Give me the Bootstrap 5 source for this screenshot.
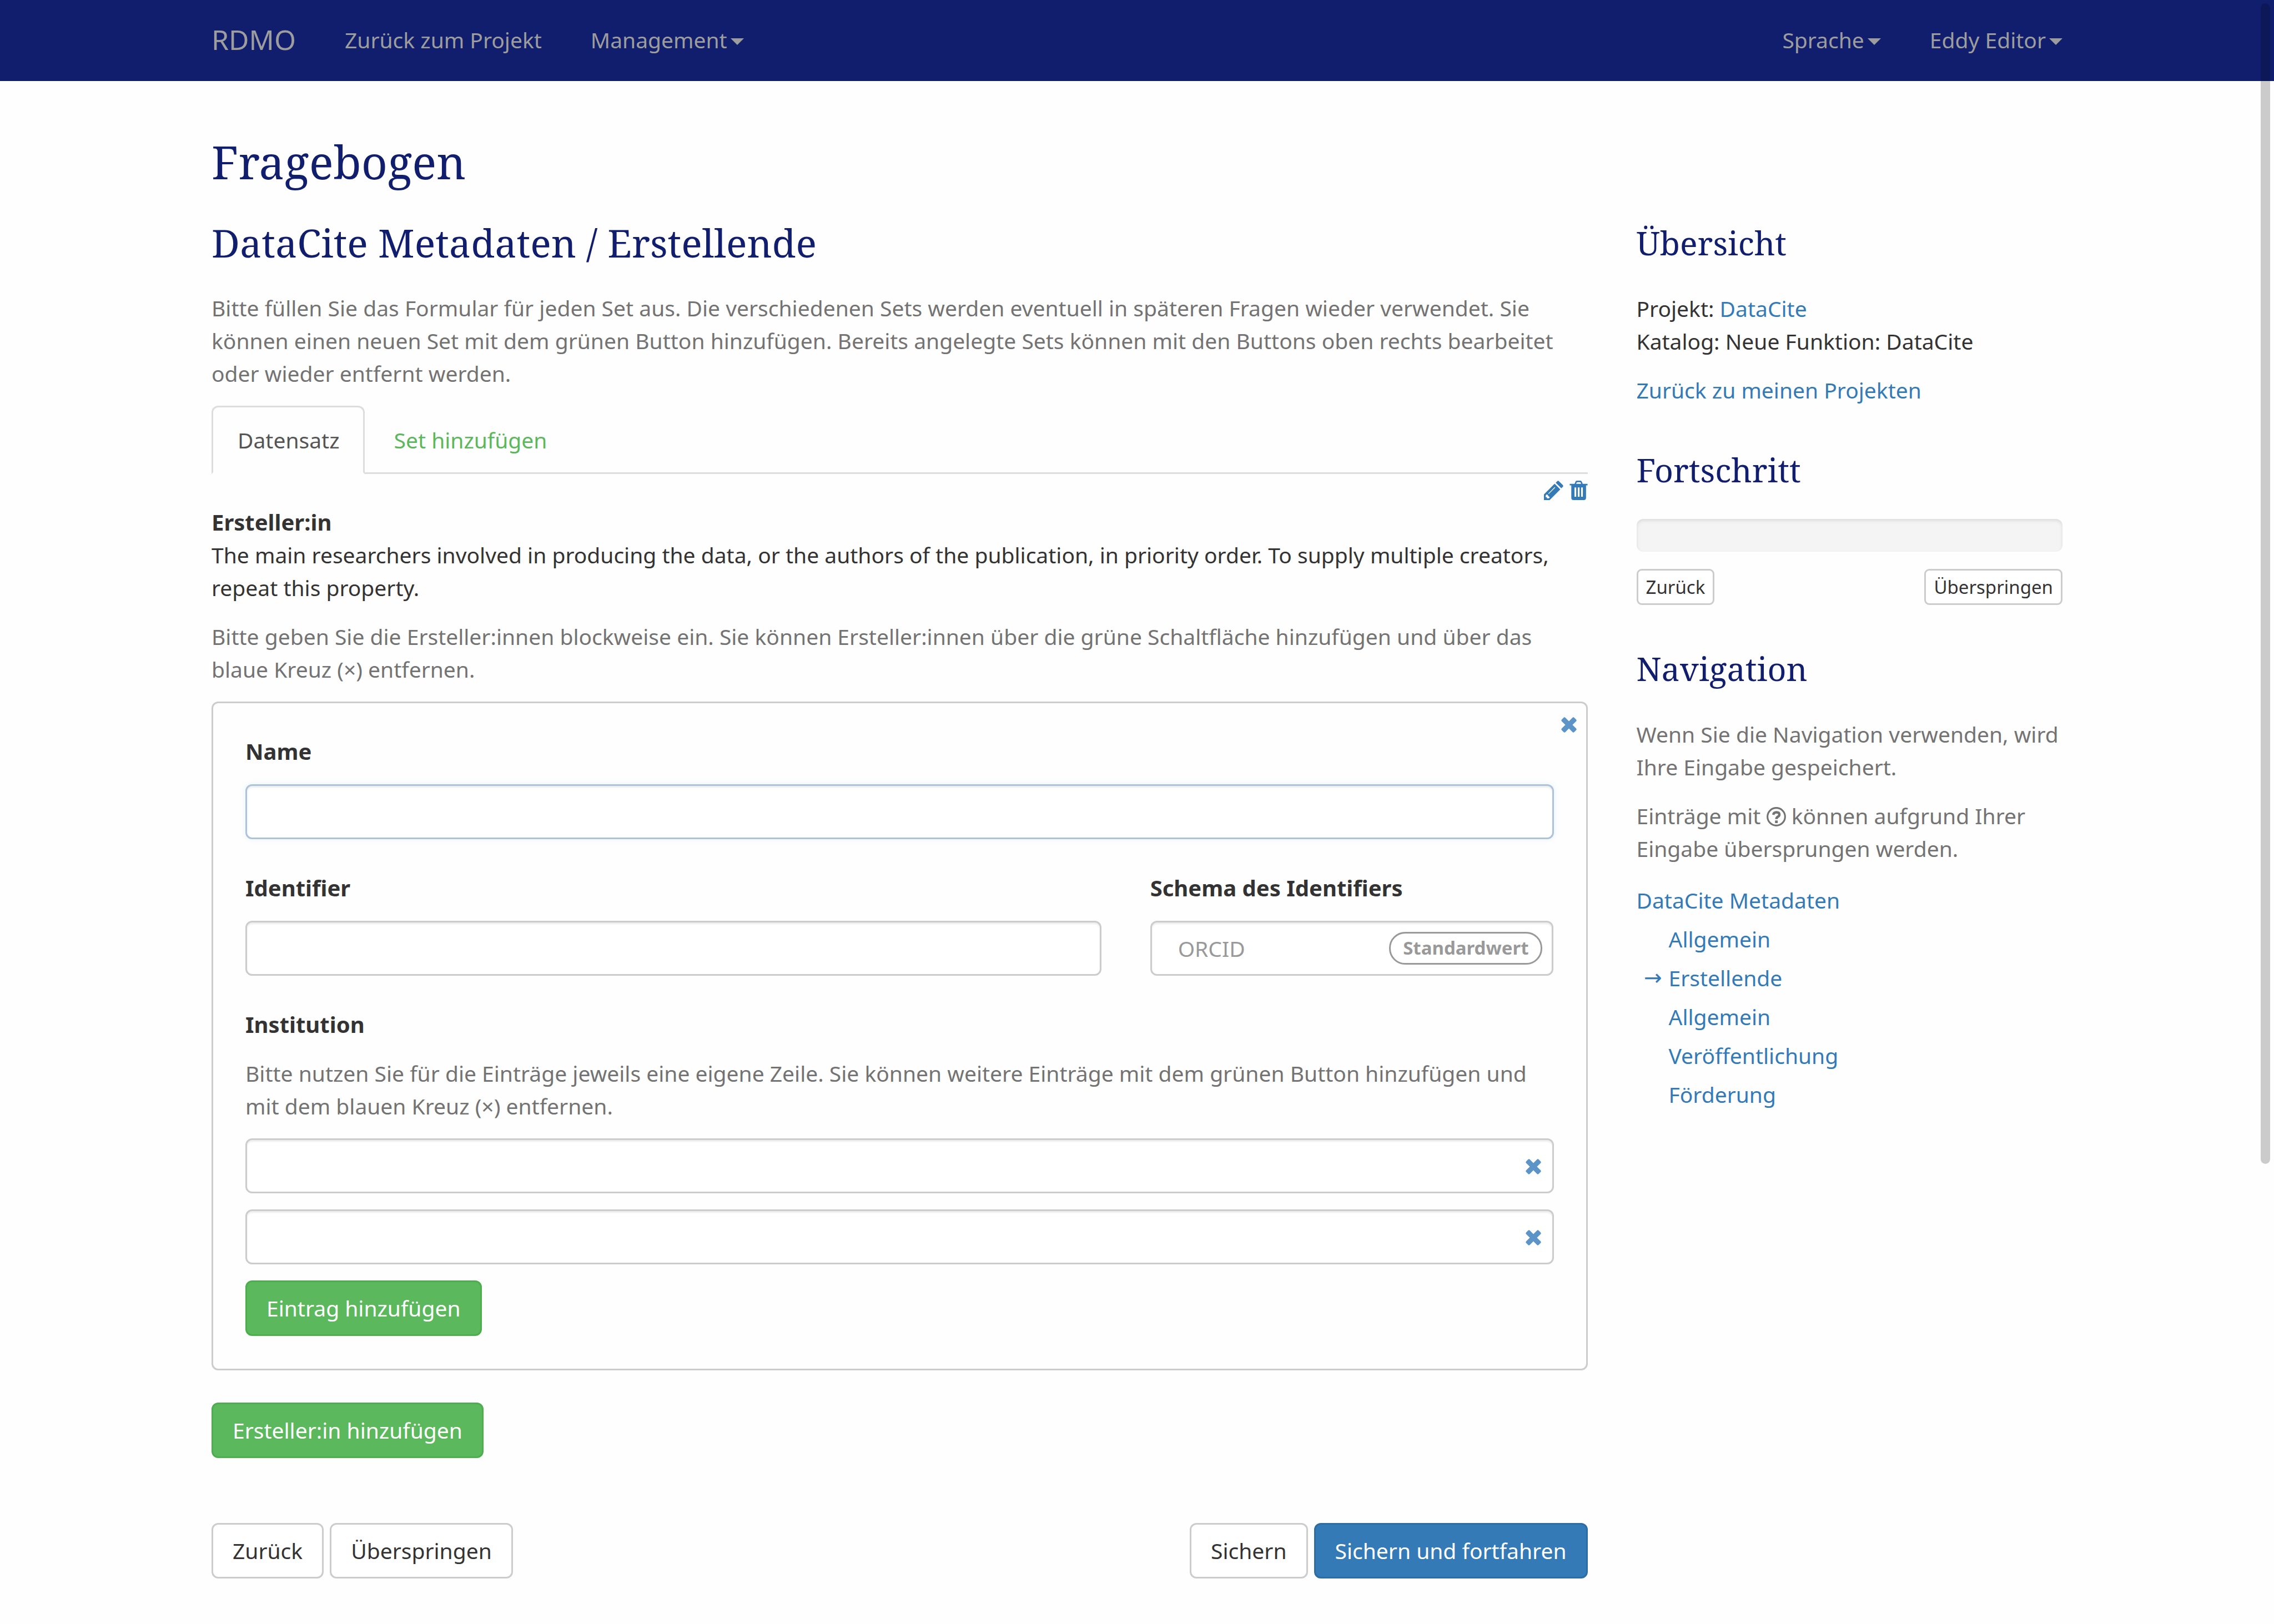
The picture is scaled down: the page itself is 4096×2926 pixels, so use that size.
<!DOCTYPE html>
<html lang="de">
<head>
<meta charset="utf-8">
<meta name="viewport" content="width=device-width, initial-scale=1">
<title>RDMO – Fragebogen</title>
<link href="https://cdn.jsdelivr.net/npm/bootstrap@5.3.0/dist/css/bootstrap.min.css" rel="stylesheet">
<style>
:root{--ink:#333;--navy:#111e6e;--blue:#337ab7;--green:#5cb85c;--line:#ccc;--soft:#737373}
body{font-family:"Noto Sans","Open Sans",sans-serif;font-size:39px;line-height:59px;color:var(--ink);background:#fefefe;position:relative}
a{color:var(--blue);text-decoration:none}
p{margin-bottom:29px}
h1,h2,h3{font-family:"Noto Serif","DejaVu Serif Condensed","DejaVu Serif",serif;font-weight:400;color:var(--navy)}
h1{font-size:82px;line-height:90px;margin:0 0 63px}
h2,h3{line-height:77px;margin:0 0 49px}
h2{font-size:70px}
h3{font-size:59px;margin-bottom:50px}
.page-width{max-width:3422px;--bs-gutter-x:88px}
.page-width .row{--bs-gutter-x:88px}
.topbar{background:var(--navy);border-bottom:3px solid #101d6b;padding:0}
.topbar .page-width{flex-wrap:nowrap;padding:0}
.topbar .navbar-brand,.topbar .navbar-nav .nav-link{color:#9d9d9d;padding:42px 44px;margin:0;line-height:59px}
.topbar .navbar-brand{font-size:50px}
.topbar .dropdown-toggle::after{margin-left:6px;vertical-align:6px;border-top:12px solid;border-right:12px solid transparent;border-left:12px solid transparent}
.content{padding-top:100px}
.muted{color:var(--soft)}
.set-tabs{border-bottom:3px solid #ddd}
.set-tabs .nav-link{border:3px solid transparent;border-radius:12px 12px 0 0;padding:29px 42px 29px 44px;margin:0 6px -3px 0;color:var(--green)}
.set-tabs .nav-link.active{color:#555;background:#fefefe;border-color:#ddd #ddd #fefefe}
.set-tools{gap:11px;padding:12px 0 10px}
.icon-btn{background:none;border:0;padding:0;line-height:0;color:var(--blue);display:block}
.icon-btn svg{display:block;fill:currentColor}
.remove-btn{position:absolute;color:#5c94c7}
.block-set{position:relative;border:3px solid var(--line);border-radius:12px;padding:57px 58px 59px;margin-bottom:58px}
.block-set>.remove-btn{top:25px;right:17px}
.field-title{display:block;font-size:40px;font-weight:700}
.field-label{margin-bottom:30px}
.field-group{margin-bottom:58px}
.help-label{margin-bottom:29px}
.box-input{height:99px;border:3px solid var(--line);border-radius:12px;background:#fff;padding:17px 47px;font-size:39px;line-height:59px;color:#999;box-shadow:inset 0 3px 3px rgba(0,0,0,.075)}
.box-input.is-active{border-color:#adc3d9;box-shadow:inset 0 3px 3px rgba(0,0,0,.075),0 0 12px rgba(102,175,233,.15)}
.entry{position:relative;margin-bottom:29px}
.entry .remove-btn{top:37px;right:23px}
.default-pill{position:absolute;top:20px;right:20px;height:59px;border:3px solid #999;border-radius:29px;padding:0 22px;font-size:33px;line-height:52px;font-weight:700;color:#999}
.act{border:3px solid var(--line);border-radius:12px;background:#fff;color:var(--ink);font-size:39px;line-height:59px;padding:17px 35px 18px}
.act-green{background:var(--green);border-color:#4cae4c;color:#fff}
.act-blue{background:var(--blue);border-color:#2e6da4;color:#fff}
.act-small{font-size:33px;line-height:51px;padding:4px 14px;border-radius:9px}
.form-foot{margin-top:117px}
.foot-gap{gap:11px}
.side-block{margin-bottom:76px}
.meter{height:59px;border-radius:12px;background:#f4f4f4;box-shadow:inset 0 3px 6px rgba(0,0,0,.1);margin-bottom:31px}
.help-icon{width:35px;height:35px;vertical-align:-4px}
.toc{line-height:70px}
.toc ul{padding-left:58px}
.toc .current{position:relative}
.toc .current::before{content:"→";position:absolute;right:100%;margin-right:12px;font-family:"DejaVu Sans",sans-serif}
.scroll-thumb{position:absolute;top:6px;right:7px;width:17px;height:2091px;border-radius:9px;background:rgba(0,0,0,.2)}
</style>
</head>
<body>
<nav class="navbar navbar-expand topbar">
  <div class="container-fluid page-width">
    <a class="navbar-brand" href="#">RDMO</a>
    <ul class="navbar-nav me-auto">
      <li class="nav-item"><a class="nav-link" href="#">Zurück zum Projekt</a></li>
      <li class="nav-item dropdown"><a class="nav-link dropdown-toggle" href="#" role="button" data-bs-toggle="dropdown">Management</a></li>
    </ul>
    <ul class="navbar-nav">
      <li class="nav-item dropdown"><a class="nav-link dropdown-toggle" href="#" role="button" data-bs-toggle="dropdown">Sprache</a></li>
      <li class="nav-item dropdown"><a class="nav-link dropdown-toggle" href="#" role="button" data-bs-toggle="dropdown">Eddy Editor</a></li>
    </ul>
  </div>
</nav>

<div class="container-fluid page-width content">
  <h1>Fragebogen</h1>
  <div class="row">
    <main class="col-9">
      <h2>DataCite Metadaten / Erstellende</h2>
      <p class="muted">Bitte füllen Sie das Formular für jeden Set aus. Die verschiedenen Sets werden eventuell in späteren Fragen wieder verwendet. Sie können einen neuen Set mit dem grünen Button hinzufügen. Bereits angelegte Sets können mit den Buttons oben rechts bearbeitet oder wieder entfernt werden.</p>

      <ul class="nav nav-tabs set-tabs">
        <li class="nav-item"><a class="nav-link active" href="#">Datensatz</a></li>
        <li class="nav-item"><a class="nav-link" href="#">Set hinzufügen</a></li>
      </ul>
      <div class="set-tools d-flex justify-content-end">
        <button type="button" class="icon-btn" aria-label="Set bearbeiten">
          <svg width="35" height="35" viewBox="0 0 36 36"><path fill-rule="evenodd" d="M0 36V25.500L19.800 5.700 30.300 16.200 10.500 36ZM3.600 26.800 3 30.500H5.500V33H9.200L10.800 30.500 8 28.500 7.200 26.200 4.600 25.800ZM8 23.800 9 24.800 21 12.800 20 11.800Z"/><path d="M21.800 3.800 24.400 1.200Q26.200-.6 28 1.200L34.800 8Q36.600 9.800 34.800 11.600L32.200 14.200Z"/></svg>
        </button>
        <button type="button" class="icon-btn" aria-label="Set entfernen">
          <svg width="33" height="35" viewBox="0 0 33 36"><path fill-rule="evenodd" d="M0 6H9L10.500 2Q11.200 0 13.500 0H19.500Q21.800 0 22.500 2L24 6H33V8.800H30.200V31.500Q30.200 36 26 36H7Q2.900 36 2.900 31.500V8.800H0ZM11.800 6H21.200L20.200 3.600Q19.900 2.900 19.200 2.900H13.800Q13.100 2.900 12.800 3.600ZM8.800 12.500V29.800H12V12.500ZM15 12.500V29.800H18.200V12.500ZM21.100 12.500V29.800H24.300V12.500Z"/></svg>
        </button>
      </div>

      <form>
        <strong class="field-title">Ersteller:in</strong>
        <p>The main researchers involved in producing the data, or the authors of the publication, in priority order. To supply multiple creators, repeat this property.</p>
        <p class="muted">Bitte geben Sie die Ersteller:innen blockweise ein. Sie können Ersteller:innen über die grüne Schaltfläche hinzufügen und über das blaue Kreuz (×) entfernen.</p>

        <div class="block-set">
          <button type="button" class="icon-btn remove-btn" aria-label="Ersteller:in entfernen">
            <svg width="28" height="28" viewBox="0 0 28 28"><path d="M1.200 7.800Q-.6 6 1.200 4.200L4.200 1.200Q6 -.6 7.800 1.200L14 7.600 20.200 1.200Q22-.6 23.800 1.200L26.800 4.200Q28.600 6 26.800 7.800L20.400 14 26.800 20.200Q28.600 22 26.800 23.800L23.800 26.800Q22 28.600 20.200 26.800L14 20.400 7.800 26.800Q6 28.600 4.200 26.800L1.200 23.800Q-.6 22 1.200 20.200L7.600 14Z"/></svg>
          </button>
          <div class="field-group">
            <label class="field-title field-label" for="f-name">Name</label>
            <input type="text" id="f-name" class="form-control box-input is-active">
          </div>
          <div class="row">
            <div class="col-8 field-group">
              <label class="field-title field-label" for="f-ident">Identifier</label>
              <input type="text" id="f-ident" class="form-control box-input">
            </div>
            <div class="col-4 field-group">
              <label class="field-title field-label" for="f-scheme">Schema des Identifiers</label>
              <div class="position-relative">
                <input type="text" id="f-scheme" class="form-control box-input" value="ORCID">
                <span class="default-pill">Standardwert</span>
              </div>
            </div>
          </div>
          <label class="field-title help-label" for="f-inst1">Institution</label>
          <p class="muted">Bitte nutzen Sie für die Einträge jeweils eine eigene Zeile. Sie können weitere Einträge mit dem grünen Button hinzufügen und mit dem blauen Kreuz (×) entfernen.</p>
          <div class="entry">
            <input type="text" id="f-inst1" class="form-control box-input">
            <button type="button" class="icon-btn remove-btn" aria-label="Eintrag entfernen">
              <svg width="28" height="28" viewBox="0 0 28 28"><path d="M1.200 7.800Q-.6 6 1.200 4.200L4.200 1.200Q6 -.6 7.800 1.200L14 7.600 20.200 1.200Q22-.6 23.800 1.200L26.800 4.200Q28.600 6 26.800 7.800L20.400 14 26.800 20.200Q28.600 22 26.800 23.800L23.800 26.800Q22 28.600 20.200 26.800L14 20.400 7.800 26.800Q6 28.600 4.200 26.800L1.200 23.800Q-.6 22 1.200 20.200L7.600 14Z"/></svg>
            </button>
          </div>
          <div class="entry">
            <input type="text" id="f-inst2" class="form-control box-input" aria-label="Institution 2">
            <button type="button" class="icon-btn remove-btn" aria-label="Eintrag entfernen">
              <svg width="28" height="28" viewBox="0 0 28 28"><path d="M1.200 7.800Q-.6 6 1.200 4.200L4.200 1.200Q6 -.6 7.800 1.200L14 7.600 20.200 1.200Q22-.6 23.800 1.200L26.800 4.200Q28.600 6 26.800 7.800L20.400 14 26.800 20.200Q28.600 22 26.800 23.800L23.800 26.800Q22 28.600 20.200 26.800L14 20.400 7.800 26.800Q6 28.600 4.200 26.800L1.200 23.800Q-.6 22 1.200 20.200L7.600 14Z"/></svg>
            </button>
          </div>
          <button type="button" class="btn d-block act act-green">Eintrag hinzufügen</button>
        </div>
        <button type="button" class="btn d-block act act-green">Ersteller:in hinzufügen</button>

        <div class="form-foot d-flex justify-content-between">
          <div class="d-flex foot-gap">
            <button type="button" class="btn act">Zurück</button>
            <button type="button" class="btn act">Überspringen</button>
          </div>
          <div class="d-flex foot-gap">
            <button type="button" class="btn act">Sichern</button>
            <button type="submit" class="btn act act-blue">Sichern und fortfahren</button>
          </div>
        </div>
      </form>
    </main>

    <aside class="col-3">
      <section class="side-block">
        <h3>Übersicht</h3>
        <p>Projekt: <a href="#">DataCite</a><br>Katalog: Neue Funktion: DataCite</p>
        <a class="d-block" href="#">Zurück zu meinen Projekten</a>
      </section>
      <section class="side-block">
        <h3>Fortschritt</h3>
        <div class="progress meter" role="progressbar" aria-label="Fortschritt" aria-valuenow="0" aria-valuemin="0" aria-valuemax="100"></div>
        <div class="d-flex justify-content-between">
          <button type="button" class="btn act act-small">Zurück</button>
          <button type="button" class="btn act act-small">Überspringen</button>
        </div>
      </section>
      <section>
        <h3>Navigation</h3>
        <p class="muted">Wenn Sie die Navigation verwenden, wird Ihre Eingabe gespeichert.</p>
        <p class="muted">Einträge mit <svg class="help-icon" viewBox="0 0 36 36" aria-hidden="true"><circle cx="18" cy="18" r="16.300" fill="none" stroke="currentColor" stroke-width="3.200"/><path d="M12.400 14.300Q13.400 9.800 18.400 9.800 23.700 9.800 23.700 14.100 23.700 16.400 21 18 18.200 19.600 18.200 22.400" fill="none" stroke="currentColor" stroke-width="4.600"/><rect x="15.700" y="25" width="5" height="4.800" rx=".6" fill="currentColor"/></svg> können aufgrund Ihrer Eingabe übersprungen werden.</p>
        <nav class="toc">
          <a href="#">DataCite Metadaten</a>
          <ul class="list-unstyled mb-0">
            <li><a href="#">Allgemein</a></li>
            <li><a class="current" href="#">Erstellende</a></li>
            <li><a href="#">Allgemein</a></li>
            <li><a href="#">Veröffentlichung</a></li>
            <li><a href="#">Förderung</a></li>
          </ul>
        </nav>
      </section>
    </aside>
  </div>
</div>
<div class="scroll-thumb"></div>
<script src="https://cdn.jsdelivr.net/npm/bootstrap@5.3.0/dist/js/bootstrap.bundle.min.js"></script>
</body>
</html>
